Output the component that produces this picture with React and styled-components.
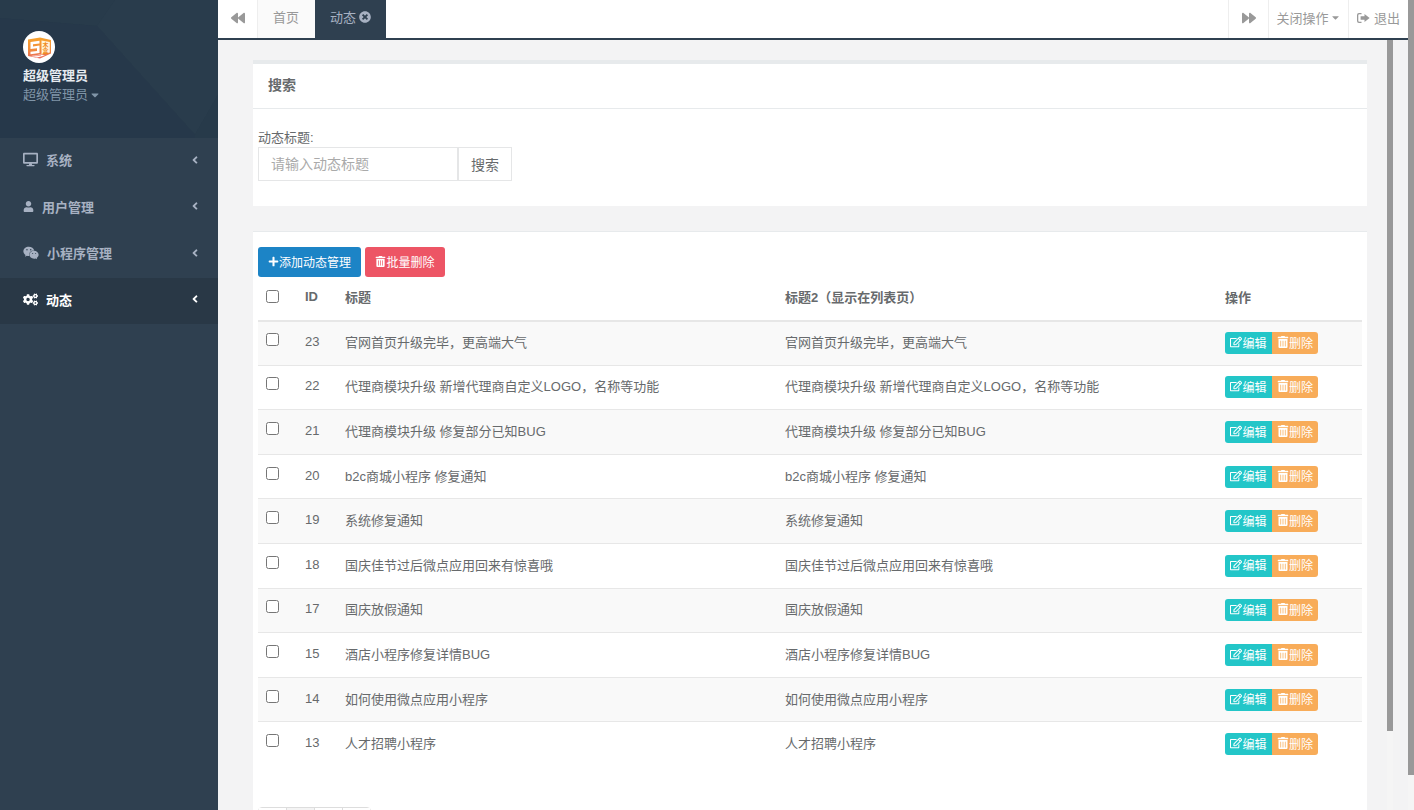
import React from 'react';
import styled, { createGlobalStyle } from 'styled-components';
import {
  FaDesktop, FaUser, FaWeixin, FaCogs, FaAngleLeft, FaBackward, FaForward,
  FaTimesCircle, FaPlus, FaTrashAlt, FaRegEdit, FaCaretDown,
} from 'react-icons/fa';

const rows = [
  { id: 23, title: '官网首页升级完毕，更高端大气' },
  { id: 22, title: '代理商模块升级 新增代理商自定义LOGO，名称等功能' },
  { id: 21, title: '代理商模块升级 修复部分已知BUG' },
  { id: 20, title: 'b2c商城小程序 修复通知' },
  { id: 19, title: '系统修复通知' },
  { id: 18, title: '国庆佳节过后微点应用回来有惊喜哦' },
  { id: 17, title: '国庆放假通知' },
  { id: 15, title: '酒店小程序修复详情BUG' },
  { id: 14, title: '如何使用微点应用小程序' },
  { id: 13, title: '人才招聘小程序' },
];

const menu = [
  { label: '系统', Icon: FaDesktop, size: 15, gap: 8 },
  { label: '用户管理', Icon: FaUser, size: 11, gap: 8 },
  { label: '小程序管理', Icon: FaWeixin, size: 16, gap: 8 },
  { label: '动态', Icon: FaCogs, size: 15, gap: 8, active: true },
];

const GlobalStyle = createGlobalStyle`
  html, body {
    overflow: hidden;
  }
  body {
    margin: 0;
    background: #f3f3f4;
    font-family: "Liberation Sans", "Noto Sans CJK SC", sans-serif;
    font-size: 13px;
    color: #676a6c;
  }
  * {
    box-sizing: border-box;
  }
`;

const Page = styled.div`
  display: flex;
  height: 810px;
  overflow: hidden;
`;

const Sidebar = styled.aside`
  width: 218px;
  flex: none;
  background: #2f4050;
`;

const Profile = styled.div`
  position: relative;
  height: 138px;
  padding: 31px 0 0 23px;
  background: #273a4a;
  overflow: hidden;
`;

const ProfilePattern = styled.svg`
  position: absolute;
  inset: 0;
`;

const ProfileBody = styled.div`
  position: relative;
  display: flex;
  flex-direction: column;
`;

const Avatar = styled.svg`
  width: 32px;
  height: 32px;
  display: block;
`;

const ProfileName = styled.strong`
  margin-top: 3px;
  line-height: 19px;
  color: #e6ebf0;
  font-weight: 700;
`;

const ProfileRole = styled.span`
  display: flex;
  align-items: center;
  gap: 1px;
  line-height: 19px;
  color: #8095a8;
  svg {
    font-size: 12px;
  }
`;

const MenuItem = styled.a`
  display: flex;
  align-items: center;
  height: 46.5px;
  padding: 0 17px 3px 23px;
  font-weight: 600;
  color: ${(p) => (p.$active ? '#fff' : '#a7b1c2')};
  background: ${(p) => (p.$active ? '#293846' : 'transparent')};
`;

const MenuLabel = styled.span`
  margin-left: ${(p) => p.$gap}px;
  flex: 1;
`;

const Main = styled.div`
  flex: 1;
  min-width: 0;
  display: flex;
  flex-direction: column;
`;

const TopBar = styled.nav`
  display: flex;
  height: 40px;
  flex: none;
  background: #fff;
  border-bottom: 2px solid #2f4050;
`;

const NavButton = styled.div`
  width: ${(p) => p.$width}px;
  display: flex;
  align-items: center;
  justify-content: center;
  gap: ${(p) => p.$gap || 0}px;
  padding-bottom: 3px;
  color: #999;
  border-${(p) => p.$side || 'left'}: 1px solid #eee;
`;

const Tab = styled.div`
  display: flex;
  align-items: center;
  gap: 3px;
  padding: 0 15px 5px;
  width: ${(p) => p.$width}px;
  color: ${(p) => (p.$active ? '#a7b1c2' : '#999')};
  background: ${(p) => (p.$active ? '#2f4050' : '#fafafa')};
  svg {
    font-size: 12px;
  }
`;

const TopSpacer = styled.div`
  flex: 1;
`;

const Workspace = styled.div`
  display: flex;
  width: 1175px;
  height: 770px;
`;

const ContentInner = styled.div`
  flex: 1;
  min-width: 0;
  height: 770px;
  overflow: hidden;
  padding: 20px 20px 0 35px;
`;

const ScrollTrack = styled.div`
  width: 6px;
  flex: none;
  background: #f5f5f5;
`;

const ScrollThumb = styled.div`
  height: ${(p) => p.$height}px;
  background: #999;
`;

const SearchCard = styled.section`
  height: 146px;
  background: #fff;
  border-top: 4px solid #e7eaec;
`;

const CardTitle = styled.h5`
  margin: 0;
  height: 45px;
  padding: 0 15px;
  font-size: 14px;
  line-height: 42px;
  font-weight: 600;
  border-bottom: 1px solid #e7eaec;
`;

const SearchBody = styled.div`
  padding: 20px 5px 0;
`;

const FieldLabel = styled.label`
  display: block;
  line-height: 17px;
  margin-bottom: 1px;
`;

const SearchRow = styled.div`
  display: flex;
  height: 34px;
`;

const SearchInput = styled.input`
  width: 200px;
  padding: 0 12px;
  font: inherit;
  font-size: 14px;
  color: inherit;
  border: 1px solid #e5e6e7;
  outline: none;
  &::placeholder {
    color: #aaa;
  }
`;

const SearchButton = styled.button`
  width: 54px;
  padding: 0 0 1px;
  font: inherit;
  font-size: 14px;
  color: #676a6c;
  background: #fff;
  border: 1px solid #e5e6e7;
`;

const ListCard = styled.section`
  margin-top: 25px;
  padding: 15px 5px 0;
  background: #fff;
  border-top: 1px solid #e7eaec;
`;

const Toolbar = styled.div`
  display: flex;
  gap: 4px;
`;

const ToolButton = styled.button`
  display: flex;
  align-items: center;
  justify-content: center;
  width: ${(p) => p.$width}px;
  height: 30px;
  padding: 0 0 2px;
  font: inherit;
  font-size: 12px;
  color: #fff;
  background: ${(p) => p.$bg};
  border: none;
  border-radius: 3px;
  svg {
    font-size: 11px;
  }
`;

const Table = styled.table`
  width: 1104px;
  table-layout: fixed;
  border-collapse: collapse;
`;

const HeadCell = styled.th`
  height: 43.6px;
  padding: 0 8px 4px;
  text-align: left;
  font-weight: 600;
  vertical-align: middle;
  border-bottom: 2px solid #e7e7e7;
`;

const Row = styled.tr`
  height: 44.6px;
  background: ${(p) => (p.$striped ? '#f9f9f9' : '#fff')};
  border-bottom: 1px solid #e7e7e7;
  &:last-child {
    border-bottom: none;
  }
`;

const Cell = styled.td`
  padding: 0 8px 3px;
  vertical-align: middle;
`;

const ActionCell = styled.td`
  padding: 0 8px;
  vertical-align: middle;
`;

const Check = styled.input.attrs({ type: 'checkbox' })`
  display: block;
  width: 13px;
  height: 13px;
  margin: 0 0 ${(p) => (p.$head ? 0 : 4)}px;
`;

const RowActions = styled.div`
  display: flex;
  height: 22px;
`;

const RowButton = styled.button`
  display: flex;
  align-items: center;
  justify-content: center;
  width: ${(p) => p.$width}px;
  padding: 0 0 2px;
  font: inherit;
  font-size: 12px;
  color: #fff;
  background: ${(p) => p.$bg};
  border: none;
  border-radius: ${(p) => p.$radius};
  svg {
    font-size: 12px;
  }
`;

const Pagination = styled.div`
  display: flex;
  width: 113px;
  height: 34px;
  margin-top: 40px;
  background: #fff;
  border: 1px solid #ddd;
  border-radius: 4px;
`;

const PageCell = styled.div`
  flex: 1;
  background: ${(p) => (p.$current ? '#f4f4f4' : '#fff')};
  border-left: ${(p) => (p.$first ? 'none' : '1px solid #ddd')};
`;

const SignOutIcon = () => (
  <svg width="13" height="12" viewBox="0 0 13 12" fill="#999">
    <path d="M4.5 1H2a2 2 0 0 0-2 2v6a2 2 0 0 0 2 2h2.5v-1.3H2.2a.9.9 0 0 1-.9-.9V3.2c0-.5.4-.9.9-.9h2.3z" />
    <path d="M7.5 2v2.3H3.6v3.4h3.9V10L12.6 6z" />
  </svg>
);

const LogoMark = () => (
  <Avatar viewBox="0 0 32 32">
    <defs>
      <linearGradient id="logoFill" x1="0" y1="0" x2="0" y2="1">
        <stop offset="0" stopColor="#f9a32b" />
        <stop offset="0.6" stopColor="#f08a3c" />
        <stop offset="1" stopColor="#e9695f" />
      </linearGradient>
    </defs>
    <circle cx="16" cy="16" r="16" fill="#fff" />
    <path d="M5 8.5 17 6.5 28 9V22.5L17 27.5 5 25z" fill="url(#logoFill)" />
    <path d="M7.5 11 16.5 9.7V12.4L10 13.3V15.4L16.5 14.6V22L7.5 23.2V20.8L14 20V17.2L7.5 18z" fill="#fff" />
    <path d="M18.5 9.5 26.8 11V21.6L18.5 23.6z" fill="#fff4dc" />
    <path d="M8 25 17 23.6 22 24.4 14 26.6z" fill="#fff" />
    <path d="M10.5 25.1 18 24.2" stroke="#ec7467" strokeWidth="0.7" />
    <text x="22.6" y="15.8" fontSize="6" textAnchor="middle" fontWeight="700" fill="#ef8a1a">木</text>
    <text x="22.6" y="21.8" fontSize="6" textAnchor="middle" fontWeight="700" fill="#ef8a1a">盒</text>
  </Avatar>
);

const App = () => {
  return (
    <Page>
      <GlobalStyle />
      <Sidebar>
        <Profile>
          <ProfilePattern width="218" height="138" viewBox="0 0 218 138">
            <path d="M0 0H115L97 26 0 18z" fill="#283b4b" />
            <path d="M115 0H218V95L195 135 97 26z" fill="#293c4c" />
            <path d="M218 95V138H195V135z" fill="#273a4a" />
            <path d="M0 18 97 26 195 135V138H0z" fill="#26384a" />
          </ProfilePattern>
          <ProfileBody>
            <LogoMark />
            <ProfileName>超级管理员</ProfileName>
            <ProfileRole>超级管理员<FaCaretDown /></ProfileRole>
          </ProfileBody>
        </Profile>
        {menu.map(({ label, Icon, size, gap, active }) => (
          <MenuItem key={label} $active={active}>
            <Icon size={size} />
            <MenuLabel $gap={gap}>{label}</MenuLabel>
            <FaAngleLeft size={12} />
          </MenuItem>
        ))}
      </Sidebar>
      <Main>
        <TopBar>
          <NavButton $width={40} $side="right"><FaBackward size={14} /></NavButton>
          <Tab $width={57}>首页</Tab>
          <Tab $width={71} $active>动态<FaTimesCircle /></Tab>
          <TopSpacer />
          <NavButton $width={40}><FaForward size={14} /></NavButton>
          <NavButton $width={80} $gap={1}>关闭操作<FaCaretDown size={11} /></NavButton>
          <NavButton $width={60} $gap={4}><SignOutIcon />退出</NavButton>
        </TopBar>
        <Workspace>
          <ContentInner>
            <SearchCard>
              <CardTitle>搜索</CardTitle>
              <SearchBody>
                <FieldLabel>动态标题:</FieldLabel>
                <SearchRow>
                  <SearchInput placeholder="请输入动态标题" />
                  <SearchButton>搜索</SearchButton>
                </SearchRow>
              </SearchBody>
            </SearchCard>
            <ListCard>
              <Toolbar>
                <ToolButton $width={103} $bg="#1c84c6"><FaPlus />添加动态管理</ToolButton>
                <ToolButton $width={80} $bg="#ed5565"><FaTrashAlt />批量删除</ToolButton>
              </Toolbar>
              <Table>
                <colgroup>
                  <col width="39" />
                  <col width="40" />
                  <col width="440" />
                  <col width="440" />
                  <col width="145" />
                </colgroup>
                <thead>
                  <tr>
                    <HeadCell><Check $head /></HeadCell>
                    <HeadCell>ID</HeadCell>
                    <HeadCell>标题</HeadCell>
                    <HeadCell>标题2（显示在列表页）</HeadCell>
                    <HeadCell>操作</HeadCell>
                  </tr>
                </thead>
                <tbody>
                  {rows.map((row, index) => (
                    <Row key={row.id} $striped={index % 2 === 0}>
                      <Cell><Check /></Cell>
                      <Cell>{row.id}</Cell>
                      <Cell>{row.title}</Cell>
                      <Cell>{row.title}</Cell>
                      <ActionCell>
                        <RowActions>
                          <RowButton $width={47} $bg="#23c6c8" $radius="3px 0 0 3px"><FaRegEdit />编辑</RowButton>
                          <RowButton $width={46} $bg="#f8ac59" $radius="0 3px 3px 0"><FaTrashAlt />删除</RowButton>
                        </RowActions>
                      </ActionCell>
                    </Row>
                  ))}
                </tbody>
              </Table>
              <Pagination>
                <PageCell $first />
                <PageCell $current />
                <PageCell />
                <PageCell />
              </Pagination>
            </ListCard>
          </ContentInner>
          <ScrollTrack><ScrollThumb $height={691} /></ScrollTrack>
        </Workspace>
      </Main>
      <ScrollTrack><ScrollThumb $height={775} /></ScrollTrack>
    </Page>
  );
};

export default App;
